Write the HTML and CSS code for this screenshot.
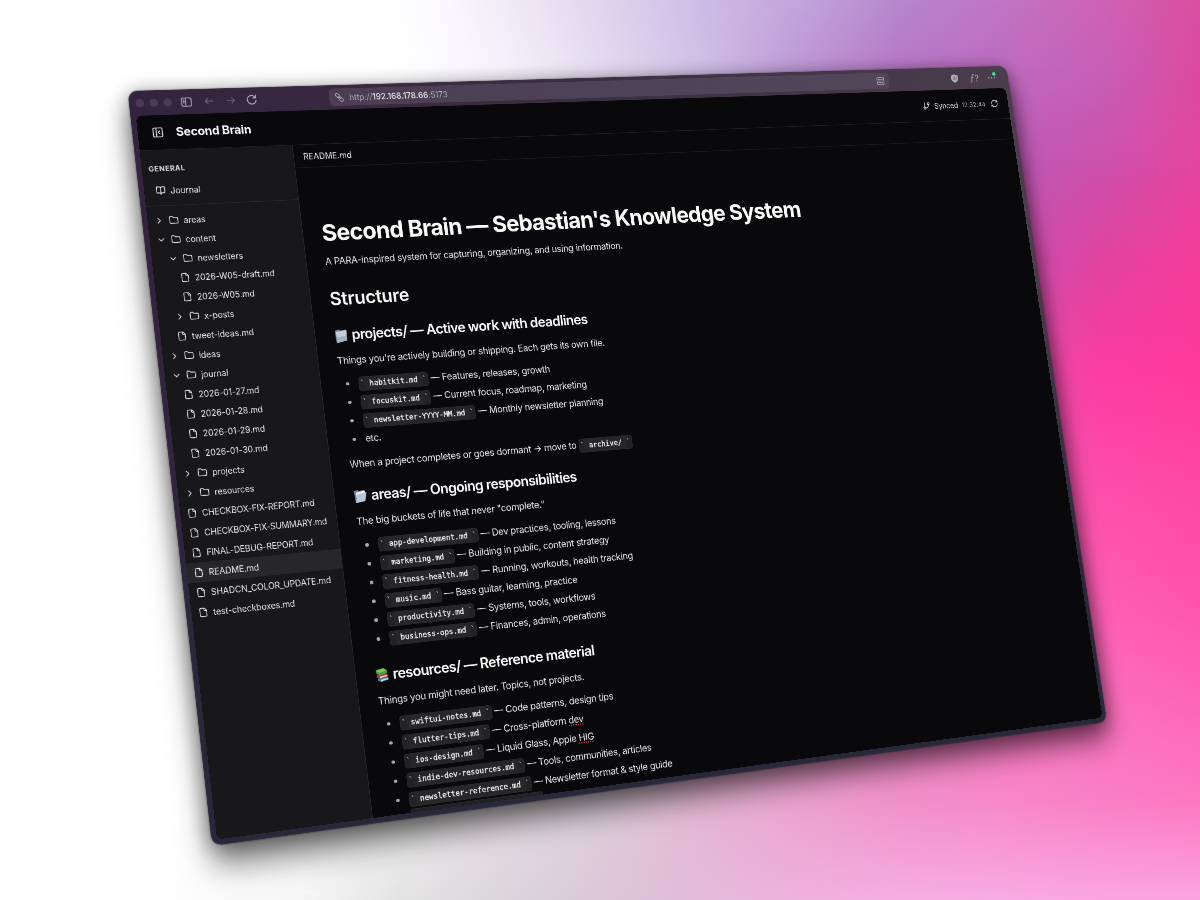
FILE: index.html
```html
<!DOCTYPE html>
<html lang="en">
<head>
<meta charset="utf-8">
<title>Second Brain</title>
<link rel="stylesheet" href="styles.css">
</head>
<body>
<svg class="defs" width="0" height="0" aria-hidden="true">
  <symbol id="i-folder" viewBox="0 0 24 24"><path d="M20 20a2 2 0 0 0 2-2V8a2 2 0 0 0-2-2h-7.9a2 2 0 0 1-1.69-.9L9.6 3.9A2 2 0 0 0 7.93 3H4a2 2 0 0 0-2 2v13a2 2 0 0 0 2 2Z"/></symbol>
  <symbol id="i-file" viewBox="0 0 24 24"><path d="M15 2H6a2 2 0 0 0-2 2v16a2 2 0 0 0 2 2h12a2 2 0 0 0 2-2V7Z"/><path d="M14 2v4a2 2 0 0 0 2 2h4"/></symbol>
  <symbol id="i-right" viewBox="0 0 24 24"><path d="m9 18 6-6-6-6"/></symbol>
  <symbol id="i-down" viewBox="0 0 24 24"><path d="m6 9 6 6 6-6"/></symbol>
  <symbol id="i-book" viewBox="0 0 24 24"><path d="M12 7v14"/><path d="M3 18a1 1 0 0 1-1-1V4a1 1 0 0 1 1-1h5a4 4 0 0 1 4 4 4 4 0 0 1 4-4h5a1 1 0 0 1 1 1v13a1 1 0 0 1-1 1h-6a3 3 0 0 0-3 3 3 3 0 0 0-3-3z"/></symbol>
  <symbol id="i-panel" viewBox="0 0 24 24"><rect x="3" y="3" width="18" height="18" rx="2"/><path d="M9 3v18"/><path d="m16 15-3-3 3-3"/></symbol>
  <symbol id="i-branch" viewBox="0 0 24 24"><path d="M6 3v12"/><circle cx="18" cy="6" r="3"/><circle cx="6" cy="18" r="3"/><path d="M18 9a9 9 0 0 1-9 9"/></symbol>
  <symbol id="i-sync" viewBox="0 0 24 24"><path d="M3 12a9 9 0 0 1 9-9 9.75 9.75 0 0 1 6.74 2.74L21 8"/><path d="M21 3v5h-5"/><path d="M21 12a9 9 0 0 1-9 9 9.75 9.75 0 0 1-6.74-2.74L3 16"/><path d="M8 16H3v5"/></symbol>
</svg>

<div class="backdrop">
  <i class="band band-0"></i><i class="band band-1"></i><i class="band band-2"></i><i class="band band-3"></i>
  <i class="band band-4"></i><i class="band band-5"></i><i class="band band-6"></i><i class="band band-7"></i>
</div>

<div class="window">
  <div class="toolbar">
    <div class="lights"><i></i><i></i><i></i></div>
    <svg class="tb-icon tb-side" viewBox="0 0 18 17"><rect x="1" y="1.500" width="16" height="14" rx="2.500"/><path d="M7.500 1.500v14M3.500 4.800h1.500M3.500 7.300h1.500M3.500 9.800h1.500"/></svg>
    <svg class="tb-icon tb-back" viewBox="0 0 16 16"><path d="M15 8H1.5M6.5 3l-5 5 5 5"/></svg>
    <svg class="tb-icon tb-fwd" viewBox="0 0 16 16"><path d="M1 8h13.5M9.500 3l5 5-5 5"/></svg>
    <svg class="tb-icon tb-reload" viewBox="0 0 16 16"><path d="M14.200 9.500A6.500 6.500 0 1 1 13.200 4.200M14.300 1v4.300H10"/></svg>
    <div class="url">
      <svg class="url-link" viewBox="0 0 16 16"><rect x="1.500" y="2.500" width="8" height="5" rx="2.500" transform="rotate(45 5.500 5)"/><rect x="6.500" y="8.500" width="8" height="5" rx="2.500" transform="rotate(45 10.500 11)"/><path d="M6 6l4 4"/></svg>
      <span class="url-text">http://<b>192.168.178.66</b>:5173</span>
      <svg class="url-reader" viewBox="0 0 16 16"><rect x="1.500" y="1.500" width="13" height="13" rx="2.500"/><path d="M4 5h2.500M8.500 5H12M4 8h4.500M10.500 8H12M4 11h8"/></svg>
    </div>
    <svg class="tb-shield" viewBox="0 0 16 18"><path d="M8 1 15 3.500v5.500c0 4-3 6.500-7 8-4-1.500-7-4-7-8V3.500z"/><path class="shield-mark" d="M5.500 6v3a1.500 1.500 0 0 0 3 0V6v3a1.500 1.500 0 0 0 3 0V6"/></svg>
    <span class="tb-fn"><i>ƒ</i>?</span>
    <span class="tb-more"><i></i><i></i><i></i><b></b></span>
  </div>

  <div class="app">
    <header class="header">
      <svg class="icon icon-panel"><use href="#i-panel"/></svg>
      <div class="brand">Second Brain</div>
      <div class="sync">
        <svg class="icon"><use href="#i-branch"/></svg>
        <span class="sync-label">Synced</span>
        <span class="sync-time">12:32:44</span>
        <svg class="icon icon-sync"><use href="#i-sync"/></svg>
      </div>
    </header>

    <div class="body">
      <aside class="sidebar">
        <div class="group">
          <div class="group-title">GENERAL</div>
          <div class="nav-item"><svg class="icon"><use href="#i-book"/></svg><span>Journal</span></div>
        </div>
        <div class="tree">
          <div class="row"><svg class="icon"><use href="#i-right"/></svg><svg class="icon"><use href="#i-folder"/></svg><span>areas</span></div>
          <div class="row"><svg class="icon"><use href="#i-down"/></svg><svg class="icon"><use href="#i-folder"/></svg><span>content</span></div>
          <div class="row d1"><svg class="icon"><use href="#i-down"/></svg><svg class="icon"><use href="#i-folder"/></svg><span>newsletters</span></div>
          <div class="row d2"><svg class="icon"><use href="#i-file"/></svg><span>2026-W05-draft.md</span></div>
          <div class="row d2"><svg class="icon"><use href="#i-file"/></svg><span>2026-W05.md</span></div>
          <div class="row d1"><svg class="icon"><use href="#i-right"/></svg><svg class="icon"><use href="#i-folder"/></svg><span>x-posts</span></div>
          <div class="row d1"><svg class="icon"><use href="#i-file"/></svg><span>tweet-ideas.md</span></div>
          <div class="row"><svg class="icon"><use href="#i-right"/></svg><svg class="icon"><use href="#i-folder"/></svg><span>ideas</span></div>
          <div class="row"><svg class="icon"><use href="#i-down"/></svg><svg class="icon"><use href="#i-folder"/></svg><span>journal</span></div>
          <div class="row d1"><svg class="icon"><use href="#i-file"/></svg><span>2026-01-27.md</span></div>
          <div class="row d1"><svg class="icon"><use href="#i-file"/></svg><span>2026-01-28.md</span></div>
          <div class="row d1"><svg class="icon"><use href="#i-file"/></svg><span>2026-01-29.md</span></div>
          <div class="row d1"><svg class="icon"><use href="#i-file"/></svg><span>2026-01-30.md</span></div>
          <div class="row"><svg class="icon"><use href="#i-right"/></svg><svg class="icon"><use href="#i-folder"/></svg><span>projects</span></div>
          <div class="row"><svg class="icon"><use href="#i-right"/></svg><svg class="icon"><use href="#i-folder"/></svg><span>resources</span></div>
          <div class="row caps"><svg class="icon"><use href="#i-file"/></svg><span>CHECKBOX-FIX-REPORT.md</span></div>
          <div class="row caps"><svg class="icon"><use href="#i-file"/></svg><span>CHECKBOX-FIX-SUMMARY.md</span></div>
          <div class="row caps"><svg class="icon"><use href="#i-file"/></svg><span>FINAL-DEBUG-REPORT.md</span></div>
          <div class="row active"><svg class="icon"><use href="#i-file"/></svg><span>README.md</span></div>
          <div class="row"><svg class="icon"><use href="#i-file"/></svg><span>SHADCN_COLOR_UPDATE.md</span></div>
          <div class="row"><svg class="icon"><use href="#i-file"/></svg><span>test-checkboxes.md</span></div>
        </div>
      </aside>

      <main class="main">
        <div class="tab">README.md</div>
        <article class="doc">
          <h1>Second Brain — Sebastian's Knowledge System</h1>
          <p class="lead">A PARA-inspired system for capturing, organizing, and using information.</p>
          <h2>Structure</h2>

          <h3><svg class="emoji" viewBox="0 0 24 24" preserveAspectRatio="none"><path fill="#7f8d9b" d="M2 3.500 9 2l2 1.500L21 2.500V20L3 23z"/><path fill="#c3ced9" d="M4 5.500 22 3.500 21 20.500 4 23z"/><path fill="#a3b1be" d="M4 14 21.500 12 21 20.500 4 23z"/></svg><span>projects/ — Active work with deadlines</span></h3>
          <p>Things you're actively building or shipping. Each gets its own file.</p>
          <ul>
            <li><span class="pill">`<code>habitkit.md</code>`</span> — Features, releases, growth</li>
            <li><span class="pill">`<code>focuskit.md</code>`</span> — Current focus, roadmap, marketing</li>
            <li><span class="pill">`<code>newsletter-YYYY-MM.md</code>`</span> — Monthly newsletter planning</li>
            <li>etc.</li>
          </ul>
          <p class="after-list">When a project completes or goes dormant → move to <span class="pill">`<code>archive/</code>`</span></p>

          <h3><svg class="emoji" viewBox="0 0 24 24" preserveAspectRatio="none"><path fill="#7b8997" d="M1.500 4 8 2.500 10 4l9-1v17L3 23z"/><path fill="#e8edf2" d="M5 6.500 20 4v13L5 20z"/><path fill="#b9c6d3" d="M6.500 9.500 23 7 19 21 3 23z"/></svg><span>areas/ — Ongoing responsibilities</span></h3>
          <p>The big buckets of life that never "complete."</p>
          <ul>
            <li><span class="pill">`<code>app-development.md</code>`</span> — Dev practices, tooling, lessons</li>
            <li><span class="pill">`<code>marketing.md</code>`</span> — Building in public, content strategy</li>
            <li><span class="pill">`<code>fitness-health.md</code>`</span> — Running, workouts, health tracking</li>
            <li><span class="pill">`<code>music.md</code>`</span> — Bass guitar, learning, practice</li>
            <li><span class="pill">`<code>productivity.md</code>`</span> — Systems, tools, workflows</li>
            <li><span class="pill">`<code>business-ops.md</code>`</span> — Finances, admin, operations</li>
          </ul>

          <h3><svg class="emoji" viewBox="0 0 24 24" preserveAspectRatio="none"><path fill="#3f7fae" d="m4 17 14-2 4 2.500v3L9 23l-5-3z"/><path fill="#e9e4da" d="m9 19.500 12.500-2v2L9 21.500z"/><path fill="#b5383a" d="m3 11 14-2 4 3v3.500L8 18l-5-3z"/><path fill="#eee8dc" d="m8 14.500 12.500-2v1.800L8 16.500z"/><path fill="#4f9a3c" d="M2 4.500 15 2l6 4v3.500L8 12.500 2 8.500z"/><path fill="#7ec65a" d="M2 4.500 15 2l6 4L8 8.500z"/></svg><span>resources/ — Reference material</span></h3>
          <p>Things you might need later. Topics, not projects.</p>
          <ul class="last">
            <li><span class="pill">`<code>swiftui-notes.md</code>`</span> — Code patterns, design tips</li>
            <li><span class="pill">`<code>flutter-tips.md</code>`</span> — Cross-platform <u>dev</u></li>
            <li><span class="pill">`<code>ios-design.md</code>`</span> — Liquid Glass, Apple <u>HIG</u></li>
            <li><span class="pill">`<code>indie-dev-resources.md</code>`</span> — Tools, communities, articles</li>
            <li><span class="pill">`<code>newsletter-reference.md</code>`</span> — Newsletter format &amp; style guide</li>
            <li><span class="pill pill-empty"></span></li>
          </ul>
        </article>
      </main>
    </div>
  </div>
</div>
</body>
</html>
```
FILE: styles.css
```css
* { box-sizing: border-box; }

body {
  margin: 0;
  width: 1200px;
  height: 900px;
  overflow: hidden;
  position: relative;
  background: #fff;
  font-family: Inter, "Liberation Sans", sans-serif;
  color: #e4e4e7;
}

.defs { position: absolute; }

/* Backdrop: horizontal colour bands, each fading in over the one above */
.backdrop { position: absolute; inset: 0; overflow: hidden; }
.band { position: absolute; inset: 0; }
.band-0 { background: linear-gradient(90deg, #fff 0 380px, #faf8fe 450px, #f1ecf8 500px, #e0d6ee 600px, #cfbce6 700px, #c3a5dc 800px, #b787cd 900px, #c075c4 1000px, #ce63b5 1100px, #da4ea0 1200px); }
.band-1 { background: linear-gradient(90deg, #fff 0 400px, #f6f2fb 500px, #e2dbf0 600px, #d0bfe6 700px, #bd98d5 800px, #b777c6 900px, #bd6bbf 1000px, #c75fb8 1100px, #dc4a9f 1200px); mask-image: linear-gradient(transparent 0, #000 70px); }
.band-2 { background: linear-gradient(90deg, #fff 0 500px, #c06cc0 900px, #c058b4 1030px, #cb52ad 1100px, #e546a0 1200px); mask-image: linear-gradient(transparent 70px, #000 160px); }
.band-3 { background: linear-gradient(90deg, #fff 0 500px, #d050b0 1000px, #d44aaa 1050px, #e0429f 1100px, #f53c9b 1200px); mask-image: linear-gradient(transparent 160px, #000 260px); }
.band-4 { background: linear-gradient(90deg, #fff 0 400px, #ec48a6 1050px, #fc3ca2 1100px, #ff3a9c 1200px); mask-image: linear-gradient(transparent 260px, #000 370px); }
.band-5 { background: linear-gradient(90deg, #fff 0 300px, #ff5fb5 1000px, #ff5fb5 1100px, #ff55ae 1200px); mask-image: linear-gradient(transparent 370px, #000 610px); }
.band-6 { background: linear-gradient(90deg, #fff 0 200px, #f1f0f1 400px, #dfcfdb 600px, #e5b6d4 700px, #eca2cf 800px, #f190cb 900px, #f788c9 1000px, #f97fc5 1100px, #fd78c1 1200px); mask-image: linear-gradient(transparent 610px, #000 800px); }
.band-7 { background: linear-gradient(90deg, #fff 0 150px, #f6f6f6 300px, #e4e3e4 400px, #dad6da 500px, #dac7d8 600px, #e3bad9 700px, #eeb1de 800px, #f5aee2 900px, #f8abe2 1000px, #faa6e0 1100px, #fba5e0 1200px); mask-image: linear-gradient(transparent 800px, #000 900px); }

/* Browser window, laid out flat at 1648x1225 and tilted in perspective */
.window {
  position: absolute;
  left: 0;
  top: 0;
  width: 1648px;
  height: 1225px;
  padding: 0 8px 9px 9px;
  display: flex;
  flex-direction: column;
  border-radius: 16px;
  background: linear-gradient(180deg, rgba(40, 39, 54, 0) 30%, #292838 80%), linear-gradient(90deg, #34233e, #3c2f42 50%, #4a3d4c);
  box-shadow: inset 0 0 0 1.5px rgba(70, 62, 82, .3), 0 0 3px rgba(0, 0, 0, .5), 0 4px 34px rgba(0, 0, 0, .36), 0 30px 50px rgba(0, 0, 0, .5);
  transform-origin: 0 0;
  transform: matrix3d(.621189, -.009387, 0, .000087591, .062971, .592343, 0, -.000028351, 0, 0, 1, 0, 127.5, 91, 0, 1);
}

.toolbar {
  flex: none;
  height: 42px;
  display: flex;
  align-items: center;
  color: #b5abba;
}
.toolbar svg { flex: none; fill: none; stroke: currentColor; stroke-width: 1.5; stroke-linecap: round; stroke-linejoin: round; }
.lights { display: flex; gap: 9px; margin-left: 2px; }
.lights i { width: 14px; height: 14px; border-radius: 50%; background: #4b3b55; }
.tb-side { width: 18px; height: 17px; margin-left: 15px; }
.tb-back { width: 15px; height: 16px; margin-left: 21px; color: #75687e; }
.tb-fwd { width: 15px; height: 16px; margin-left: 22px; color: #75687e; }
.tb-reload { width: 18px; height: 18px; margin-left: 19px; }
.url {
  margin-left: 124px;
  width: 1060px;
  height: 30px;
  padding: 0 9px 0 9px;
  border-radius: 7px;
  background: linear-gradient(90deg, #4b3e53, #52475a);
  display: flex;
  align-items: center;
  gap: 9px;
}
.toolbar .url-link, .toolbar .url-reader { width: 17px; height: 17px; stroke-width: 1.2; }
.url-text { flex: 1; font-size: 14px; letter-spacing: .07px; color: #b3a9b8; }
.url-text b { font-weight: 600; color: #ddd7e0; }
.tb-shield { width: 16px; height: 18px; margin-left: 129px; }
.toolbar .tb-shield path { fill: #b5abba; stroke: none; }
.toolbar .tb-shield .shield-mark { fill: none; stroke: #7a6f7d; }
.tb-fn { width: 24px; margin-left: 24px; font-size: 17px; }
.tb-fn i { font-family: "Liberation Serif", serif; font-size: 21px; }
.tb-more { position: relative; display: flex; gap: 3px; margin-left: 15px; }
.tb-more i { width: 3px; height: 3px; border-radius: 50%; background: #a59ba9; }
.tb-more b { position: absolute; right: -2px; top: -9px; width: 7px; height: 7px; border-radius: 50%; background: #35e59a; }

.app {
  flex: 1;
  min-height: 0;
  display: flex;
  flex-direction: column;
  overflow: hidden;
  border-radius: 10px;
  background: #09090b;
}
.icon { flex: none; width: 16px; height: 16px; fill: none; stroke: currentColor; stroke-width: 2; stroke-linecap: round; stroke-linejoin: round; }

.header {
  flex: none;
  height: 59px;
  padding: 0 21px 0 23px;
  display: flex;
  align-items: center;
  border-bottom: 1px solid #232326;
}
.icon-panel { width: 20px; height: 20px; }
.brand { margin-left: 20px; font-size: 20px; font-weight: 700; letter-spacing: -.3px; color: #fafafa; }
.sync { margin-left: auto; display: flex; align-items: center; gap: 8px; }
.sync-label { font-size: 14px; }
.sync-time { font-size: 12px; letter-spacing: .1px; color: #a1a1aa; }
.icon-sync { margin-left: 3px; }

.body { flex: 1; min-height: 0; display: flex; }
.sidebar { flex: none; width: 256px; background: #18181b; border-right: 1px solid #2a2a2d; font-size: 14px; }
.group { height: 93px; padding: 23px 11px 0; border-bottom: 1px solid #2a2a2d; }
.group-title { font-size: 12px; line-height: 16px; font-weight: 700; letter-spacing: .6px; color: #d4d4d8; }
.nav-item { margin-top: 12px; height: 32px; padding-left: 8px; display: flex; align-items: center; gap: 8px; }
.tree { padding-top: 8px; }
.row { height: 32px; padding-left: 11px; display: flex; align-items: center; gap: 8px; white-space: nowrap; letter-spacing: -.05px; }
.row.caps { letter-spacing: -.2px; }
.d1 { padding-left: 27px; }
.d2 { padding-left: 43px; }
.active { background: #27272a; letter-spacing: -.1px; }

.main { flex: 1; min-width: 0; }
.tab { height: 39px; padding-left: 16px; display: flex; align-items: center; border-bottom: 1px solid #1c1c1f; font-size: 14px; letter-spacing: .05px; }
.doc { padding: 92px 32px 0; color: #e6e6e9; font-size: 16.3px; line-height: 28px; letter-spacing: -.38px; white-space: nowrap; }
.doc h1, .doc h2, .doc h3 { margin: 0; color: #fafafa; }
.doc h1 { font-size: 40px; line-height: 40px; font-weight: 700; letter-spacing: -1.15px; }
.doc p { margin: 11.5px 0 0; }
.doc p.lead { margin-top: 14px; }
.doc h2 { margin-top: 34px; font-size: 31px; line-height: 32px; font-weight: 600; letter-spacing: -.3px; }
.doc h3 { margin-top: 30px; display: flex; align-items: center; gap: 6px; font-size: 24px; line-height: 32px; font-weight: 600; letter-spacing: -.82px; }
.emoji { width: 24px; height: 25px; flex: none; }
.doc ul { list-style: none; margin: 11px 0 0; padding: 0 0 0 32px; }
.doc ul.last { margin-top: 9.5px; }
.doc li { position: relative; height: 31px; }
.doc li::before { content: ""; position: absolute; left: -22px; top: 12px; width: 5.5px; height: 5.5px; border-radius: 50%; background: #a8a8ad; }
.doc p.after-list { margin-top: 10px; }
.after-list + h3 { margin-top: 24px; }
.doc ul + h3 { margin-top: 26.5px; }
.pill {
  display: inline-block;
  height: 24px;
  line-height: 23px;
  padding: 0 3px;
  border-radius: 5px;
  background: #222225;
  box-shadow: inset 0 0 0 1px #2c2c30;
  font-family: "DejaVu Sans Mono", monospace;
  font-size: 12.6px;
  letter-spacing: 0;
}
.pill code { display: inline-block; height: 24px; padding: 0 8px; background: #27272a; font: inherit; color: #f4f4f5; -webkit-text-stroke: .35px #f4f4f5; }
.pill-empty { width: 230px; }
.doc u { text-decoration: underline dotted #d23a3a 2px; text-underline-offset: 3px; }
```
